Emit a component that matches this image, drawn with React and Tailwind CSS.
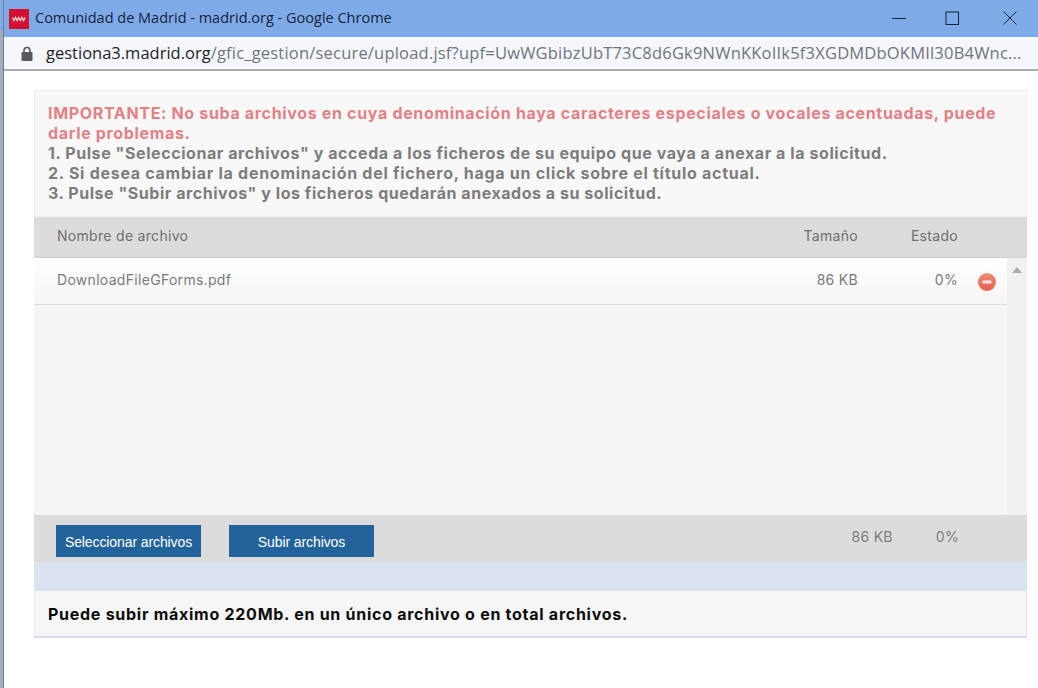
const body = { fontFamily: '"Inter", "Open Sans", sans-serif' };
const chrome = { fontFamily: '"Open Sans", "Noto Sans", sans-serif' };
const arial = { fontFamily: '"Liberation Sans", sans-serif' };

const App = () => {
  return (
    <div className="w-[1038px] h-[688px] overflow-hidden bg-white flex" style={body}>
      <div className="w-[4px] shrink-0 border-r border-[#6f7a8c] bg-[linear-gradient(#7faae8_30px,#a2acbe_30px)]" />
      <div className="w-[1034px] flex flex-col">
        <div className="h-[37px] shrink-0 bg-[#7faae8] flex items-center pl-[5px]">
          <svg width="20" height="20" viewBox="0 0 20 20" className="mr-[6px] shrink-0">
            <rect width="20" height="20" fill="#d3102f" />
            <path d="M3.5 8.5l1.5 3 1.6-3 1.6 3 1.6-3 1.6 3 1.6-3 1.6 3 1.5-3" fill="none" stroke="#ffd5d5" strokeWidth="1.3" />
          </svg>
          <span className="text-[14.5px] text-[#15233c] pb-[2px]" style={chrome}>Comunidad de Madrid - madrid.org - Google Chrome</span>
          <div className="ml-auto flex items-center pb-[1px]">
            <svg width="16" height="16" viewBox="0 0 16 16" className="mr-[37px]"><path d="M1 8.5h14" stroke="#14233c" strokeWidth="1" /></svg>
            <svg width="16" height="16" viewBox="0 0 16 16" className="mr-[42px]"><rect x="2" y="2" width="12.5" height="12.5" fill="none" stroke="#14233c" strokeWidth="1" /></svg>
            <svg width="16" height="16" viewBox="0 0 16 16" className="mr-[20px]"><path d="M1.5 1.5l13 13M14.5 1.5l-13 13" stroke="#14233c" strokeWidth="1" /></svg>
          </div>
        </div>
        <div className="h-[34px] shrink-0 bg-[#f5f7fc] flex items-center pl-[17px] border-b-2 border-[#a9aeb6]">
          <svg width="12" height="15" viewBox="0 0 12 15" className="mr-[13px] shrink-0">
            <path d="M3 7V4.5a3 3 0 0 1 6 0V7" fill="none" stroke="#55595f" strokeWidth="1.6" />
            <rect x="0.5" y="6" width="11" height="9" rx="1.2" fill="#55595f" />
          </svg>
          <span className="text-[16.5px] text-[#70757b] whitespace-nowrap" style={chrome}>
            <span className="text-[#1f2328]">gestiona3.madrid.org</span>
            <span className="tracking-[0.2px]">/gfic_gestion/secure/upload.jsf?upf=UwWGbibzUbT73C8d6Gk9NWnKKoIIk5f3XGDMDbOKMIl30B4Wnc...</span>
          </span>
        </div>

        <div className="ml-[30px] mt-[19px] w-[993px] flex flex-col">
          <div className="h-[127px] bg-[#f8f8f8] border border-[#eeeeee] px-[13px] pt-[12px] text-[16px] leading-[20px] font-bold text-[#7d7d7d]">
            <div className="text-[#e58085] tracking-[0.665px]">IMPORTANTE: No suba archivos en cuya denominación haya caracteres especiales o vocales acentuadas, puede darle problemas.</div>
            <div className="tracking-[0.57px]">1. Pulse "Seleccionar archivos" y acceda a los ficheros de su equipo que vaya a anexar a la solicitud.</div>
            <div className="tracking-[0.72px]">2. Si desea cambiar la denominación del fichero, haga un click sobre el título actual.</div>
            <div className="tracking-[0.54px]">3. Pulse "Subir archivos" y los ficheros quedarán anexados a su solicitud.</div>
          </div>

          <div className="h-[41px] pb-[4px] bg-[#dcdcdc] border-b border-[#cfcfcf] flex items-center text-[14px] tracking-[0.3px] text-[#6f6f6f]">
            <span className="ml-[23px]">Nombre de archivo</span>
            <span className="ml-auto w-[80px] text-right">Tamaño</span>
            <span className="w-[100px] text-right mr-[69px]">Estado</span>
          </div>

          <div className="h-[257px] bg-[#f5f5f5] flex">
            <div className="flex-1">
              <div className="h-[47px] pb-[3px] bg-gradient-to-b from-white to-[#f5f5f5] border-b border-[#dcdcdc] flex items-center text-[14px] tracking-[0.3px] text-[#7a7a7a]">
                <span className="ml-[23px]">DownloadFileGForms.pdf</span>
                <span className="ml-auto w-[80px] text-right">86 KB</span>
                <span className="w-[100px] text-right">0%</span>
                <svg width="18" height="18" viewBox="0 0 18 18" className="ml-[20px] mr-[11px] mt-[5px]">
                  <defs>
                    <linearGradient id="del" x1="0" y1="0" x2="0" y2="1">
                      <stop offset="0" stopColor="#f08a78" />
                      <stop offset="1" stopColor="#e9604c" />
                    </linearGradient>
                  </defs>
                  <circle cx="9" cy="9" r="9" fill="url(#del)" />
                  <rect x="4.5" y="7.5" width="9" height="3" rx="0.5" fill="#fbe9e6" />
                </svg>
              </div>
            </div>
            <div className="w-[20px] bg-[#f1f1f1] flex justify-center pt-[9px]">
              <svg width="10" height="6" viewBox="0 0 10 6"><path d="M5 0l5 6H0z" fill="#a9a9a9" /></svg>
            </div>
          </div>

          <div className="h-[47px] bg-[#dcdcdc] flex items-start pt-[10px] text-[14px] tracking-[0.3px] text-[#7c7c7c]">
            <button className="ml-[22px] w-[145px] h-[32px] pt-[3px] bg-[#23639b] text-white text-[14px] tracking-[-0.1px]" style={arial}>Seleccionar archivos</button>
            <button className="ml-[28px] w-[145px] h-[32px] pt-[3px] bg-[#23639b] text-white text-[14px] tracking-[-0.1px]" style={arial}>Subir archivos</button>
            <span className="ml-auto mt-[1px]">86 KB</span>
            <span className="ml-[43px] mr-[68px] mt-[1px]">0%</span>
          </div>

          <div className="h-[29px] bg-[#dce3f0]" />

          <div className="h-[47px] bg-[#f6f6f6] border-x border-[#e3e6ec] border-b-2 border-b-[#d6dcea] flex items-center pl-[13px] text-[16px] tracking-[0.73px] font-bold text-[#0c0c0c]">
            Puede subir máximo 220Mb. en un único archivo o en total archivos.
          </div>
        </div>
      </div>
    </div>
  );
};

export default App;
